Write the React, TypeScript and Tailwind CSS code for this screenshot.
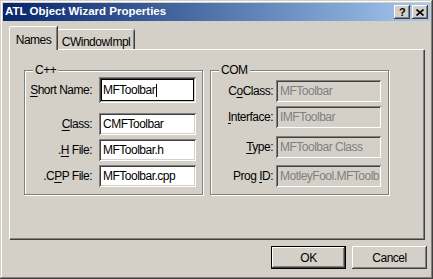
const font = { fontFamily: '"Liberation Sans", Arial, sans-serif' };

const sunken =
  'shadow-[inset_1px_1px_#808080,inset_-1px_-1px_#ffffff,inset_2px_2px_#404040,inset_-2px_-2px_#d4d0c8]';
const raised =
  'shadow-[inset_-1px_-1px_#404040,inset_1px_1px_#ffffff,inset_-2px_-2px_#808080,inset_2px_2px_#d4d0c8]';

type Field = { label: React.ReactNode; value: string; mt: string; h?: string; focus?: boolean };

function Acc({ pre = '', ch, post = '' }: { pre?: string; ch: string; post?: string }) {
  return (
    <span>
      {pre}
      <span className="underline underline-offset-2">{ch}</span>
      {post}
    </span>
  );
}

const cppFields: Field[] = [
  { label: <Acc ch="S" post="hort Name:" />, value: 'MFToolbar', mt: 'mt-[6px]', h: 'h-[26px]', focus: true },
  { label: <Acc ch="C" post="lass:" />, value: 'CMFToolbar', mt: 'mt-[10px]' },
  { label: <Acc pre="." ch="H" post=" File:" />, value: 'MFToolbar.h', mt: 'mt-[4px]' },
  { label: <Acc pre=".C" ch="P" post="P File:" />, value: 'MFToolbar.cpp', mt: 'mt-[4px]' },
];

const comFields: Field[] = [
  { label: <Acc pre="C" ch="o" post="Class:" />, value: 'MFToolbar', mt: 'mt-[9px]' },
  { label: <Acc ch="I" post="nterface:" />, value: 'IMFToolbar', mt: 'mt-[4px]' },
  { label: <Acc ch="T" post="ype:" />, value: 'MFToolbar Class', mt: 'mt-[8px]' },
  { label: <Acc pre="Prog " ch="I" post="D:" />, value: 'MotleyFool.MFToolb', mt: 'mt-[7px]' },
];

function Group({ title, children }: { title: string; children: React.ReactNode }) {
  return (
    <div className="relative w-[179px] h-[125px] border border-[#808080] shadow-[inset_1px_1px_#ffffff,1px_1px_#ffffff] flex flex-col">
      <span className="absolute left-[8px] -top-[8px] px-[2px] bg-[#d4d0c8] leading-[14px]">{title}</span>
      {children}
    </div>
  );
}

export default function App() {
  return (
    <div
      className="w-[433px] h-[279px] bg-[#d4d0c8] p-[3px] flex flex-col text-[12px] tracking-[-0.5px] text-black whitespace-nowrap shadow-[inset_-1px_-1px_#404040,inset_1px_1px_#d4d0c8,inset_-2px_-2px_#808080,inset_2px_2px_#ffffff] overflow-hidden"
      style={font}
    >
      {/* title bar */}
      <div className="h-[18px] flex items-center pl-[2px] pr-[2px] bg-gradient-to-r from-[#0a246a] to-[#a6caf0]">
        <span className="text-white font-bold text-[11.5px] leading-none flex-1 tracking-normal">ATL Object Wizard Properties</span>
        <div className="flex gap-[2px]">
          <div className={`w-[16px] h-[14px] bg-[#d4d0c8] ${raised} flex items-center justify-center font-bold text-[11px] leading-none`}>
            ?
          </div>
          <div className={`w-[16px] h-[14px] bg-[#d4d0c8] ${raised} flex items-center justify-center`}>
            <svg width="8" height="7" viewBox="0 0 8 7">
              <path d="M0.5 0.5 L7.5 6.5 M7.5 0.5 L0.5 6.5" stroke="#000" strokeWidth="1.6" />
            </svg>
          </div>
        </div>
      </div>

      {/* tabs */}
      <div className="mt-[5px] px-[6px] flex flex-col">
        <div className="h-[23px] flex items-end">
          <div className="relative z-10 -mb-px h-[24px] w-[48px] bg-[#d4d0c8] border-t border-l border-white rounded-tl-[2px] shadow-[inset_-1px_0_#808080,1px_0_#404040] flex items-start justify-center pt-[4px]">
            Names
          </div>
          <div className="h-[20px] w-[76px] border-t border-white shadow-[inset_-1px_0_#808080,1px_0_#404040] rounded-tr-[2px] flex items-start justify-center pt-[3px] ml-px">
            CWindowImpl
          </div>
        </div>

        {/* panel */}
        <div className="h-[190px] w-[415px] border-t border-l border-white shadow-[inset_-1px_-1px_#808080,1px_1px_#404040] pl-[14px] pt-[20px] flex gap-[7px]">
          <Group title="C++">
            {cppFields.map((f) => (
              <div key={f.value} className={`flex items-center ${f.mt}`}>
                <div className="w-[68px] text-right pr-[1px]">{f.label}</div>
                <div
                  className={`ml-[6px] w-[97px] ${f.h ?? 'h-[22px]'} bg-white ${sunken} flex items-center ${
                    f.focus ? 'p-[2px]' : 'pl-[4px]'
                  }`}
                >
                  {f.focus ? (
                    <div className="w-full h-full border border-black flex items-center pl-[1px]">
                      {f.value}
                      <span className="w-px h-[13px] bg-black ml-px" />
                    </div>
                  ) : (
                    f.value
                  )}
                </div>
              </div>
            ))}
          </Group>
          <Group title="COM">
            {comFields.map((f) => (
              <div key={f.value} className={`flex items-center ${f.mt}`}>
                <div className="w-[62px] text-right">{f.label}</div>
                <div className={`ml-[3px] w-[105px] h-[22px] bg-[#d4d0c8] text-[#808080] ${sunken} flex items-center pl-[4px] overflow-hidden`}>
                  {f.value}
                </div>
              </div>
            ))}
          </Group>
        </div>
      </div>

      {/* buttons */}
      <div className="mt-[7px] pr-[3px] flex justify-end gap-[6px]">
        <div className="w-[75px] h-[23px] border border-black">
          <div className={`w-full h-full ${raised} flex items-center justify-center`}>OK</div>
        </div>
        <div className={`w-[75px] h-[23px] ${raised} flex items-center justify-center`}>Cancel</div>
      </div>
    </div>
  );
}
